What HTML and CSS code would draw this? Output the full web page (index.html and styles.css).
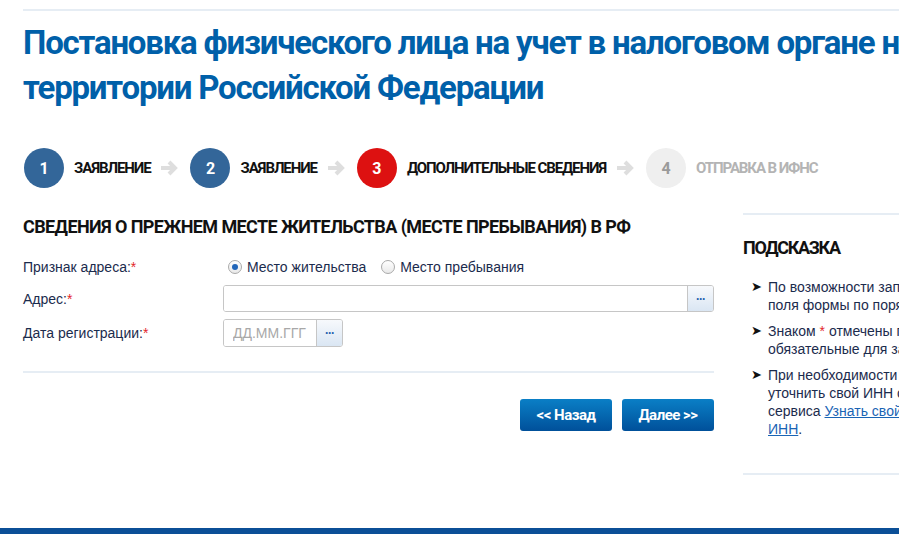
FILE: index.html
```html
<!DOCTYPE html>
<html lang="ru">

<head>
  <meta charset="UTF-8">
  <meta name="viewport" content="width=device-width, initial-scale=1.0">
  <title>Постановка на учет</title>
  <link rel="stylesheet" href="styles.css">
</head>

<body>
  <div class="page">
    <div class="rule"></div>
    <h1 class="title">Постановка физического лица на учет в налоговом органе на территории Российской Федерации</h1>

    <div class="steps">
      <div class="step done"><span class="num">1</span><span class="label">Заявление</span></div>
      <svg class="arrow" width="19" height="16" viewBox="0 0 19 16"><path d="M1 8H15M9 2L15 8L9 14" fill="none" stroke="#dedede" stroke-width="4" /></svg>
      <div class="step done"><span class="num">2</span><span class="label">Заявление</span></div>
      <svg class="arrow" width="19" height="16" viewBox="0 0 19 16"><path d="M1 8H15M9 2L15 8L9 14" fill="none" stroke="#dedede" stroke-width="4" /></svg>
      <div class="step current"><span class="num">3</span><span class="label">Дополнительные сведения</span></div>
      <svg class="arrow" width="19" height="16" viewBox="0 0 19 16"><path d="M1 8H15M9 2L15 8L9 14" fill="none" stroke="#dedede" stroke-width="4" /></svg>
      <div class="step next"><span class="num">4</span><span class="label">Отправка в ИФНС</span></div>
    </div>

    <div class="columns">
      <div class="main">
        <h2 class="section">Сведения о прежнем месте жительства (месте пребывания) в РФ</h2>

        <div class="form">
          <div class="lbl">Признак адреса:<span class="req">*</span></div>
          <div class="radios">
            <label class="radio"><span class="dot checked"></span>Место жительства</label>
            <label class="radio"><span class="dot"></span>Место пребывания</label>
          </div>

          <div class="lbl">Адрес:<span class="req">*</span></div>
          <div class="field wide">
            <input type="text">
            <span class="pick">&middot;&middot;&middot;</span>
          </div>

          <div class="lbl">Дата регистрации:<span class="req">*</span></div>
          <div class="field date">
            <input type="text" placeholder="ДД.ММ.ГГГ">
            <span class="pick">&middot;&middot;&middot;</span>
          </div>
        </div>

        <div class="buttons">
          <button class="btn">&lt;&lt; Назад</button>
          <button class="btn">Далее &gt;&gt;</button>
        </div>
      </div>

      <div class="aside">
        <h3 class="hint-title">Подсказка</h3>
        <ul class="hints">
          <li>По возможности заполняйте<br>поля формы по порядку.</li>
          <li>Знаком <span class="req">*</span> отмечены поля,<br>обязательные для заполнения.</li>
          <li>При необходимости Вы можете<br>уточнить свой ИНН с помощью<br>сервиса <a href="#">Узнать свой<br>ИНН</a>.</li>
        </ul>
      </div>
    </div>
  </div>
  <div class="footer"></div>
</body>

</html>
```

FILE: styles.css
```css
* {
  margin: 0;
  padding: 0;
  box-sizing: border-box;
}

html,
body {
  height: 100%;
}

body {
  display: flex;
  flex-direction: column;
  overflow: hidden;
  font-family: "Liberation Sans", Arial, sans-serif;
  font-size: 14px;
  color: #1b2b4d;
  background: #fff;
}

.page {
  flex: 1;
  width: 1100px;
  padding-left: 23px;
}

.rule {
  margin-top: 9px;
  height: 2px;
  background: #e6edf4;
}

/* condensed headings: no narrow face installed, so tighten Roboto */
.title,
.steps,
.section,
.hint-title,
.btn {
  font-family: Roboto, "Liberation Sans", sans-serif;
  font-weight: bold;
}

.title {
  width: 1000px;
  margin-top: 9px;
  font-size: 33px;
  line-height: 45px;
  letter-spacing: -1.2px;
  color: #0060a9;
}

.steps {
  display: flex;
  align-items: center;
  margin-top: 38px;
  text-transform: uppercase;
  font-size: 15px;
  letter-spacing: -1.1px;
}

.step {
  display: flex;
  align-items: center;
}

.step .num {
  width: 40px;
  height: 40px;
  border-radius: 50%;
  display: flex;
  align-items: center;
  justify-content: center;
  color: #fff;
  font-size: 16px;
  letter-spacing: 0;
  margin-left: 1px;
}

.step .label {
  margin-left: 10px;
  color: #111;
}

.step.done .num {
  background: #336699;
}

.step.current .num {
  background: #dd1111;
}

.step.next .num {
  background: #efefef;
  color: #9a9a9a;
}

.step.next .label {
  color: #b4b4b4;
}

.arrow {
  margin: 0 10px;
}

.columns {
  display: flex;
  margin-top: 18px;
}

.main {
  width: 691px;
}

.section {
  margin-top: 9px;
  font-size: 18px;
  line-height: 24px;
  letter-spacing: -0.6px;
  color: #111;
  text-transform: uppercase;
}

.form {
  display: grid;
  grid-template-columns: 200px 491px;
  grid-template-rows: 22px 27px 28px;
  row-gap: 7px;
  align-items: center;
  margin-top: 17px;
}

.req {
  color: #e3262b;
}

.radios {
  display: flex;
  align-items: center;
  gap: 15px;
  padding-left: 5px;
}

.radio {
  display: flex;
  align-items: center;
  gap: 5px;
}

.dot {
  width: 14px;
  height: 14px;
  border-radius: 50%;
  border: 1px solid #a9a9a9;
  background: linear-gradient(#fff, #e9e9e9);
  display: flex;
  align-items: center;
  justify-content: center;
}

.dot.checked::after {
  content: "";
  width: 6px;
  height: 6px;
  border-radius: 50%;
  background: #2166b9;
}

.field {
  display: flex;
  height: 27px;
  border: 1px solid #c6c6c6;
  border-radius: 3px;
  overflow: hidden;
}

.field.date {
  width: 120px;
  height: 28px;
}

.field input {
  flex: 1;
  min-width: 0;
  border: 0;
  outline: 0;
  padding: 0 9px;
  font: 14px "Liberation Sans", Arial, sans-serif;
}

.field input::placeholder {
  color: #a8a8a8;
}

.pick {
  width: 26px;
  border-left: 1px solid #c6c6c6;
  background: linear-gradient(#f7f9fc, #dae6f3);
  color: #1f5fae;
  font-weight: bold;
  font-size: 12px;
  display: flex;
  align-items: center;
  justify-content: center;
  letter-spacing: -1px;
}

.buttons {
  display: flex;
  justify-content: flex-end;
  gap: 10px;
  margin-top: 24px;
  padding-top: 26px;
  border-top: 2px solid #e6edf4;
}

.btn {
  width: 92px;
  height: 32px;
  border: 0;
  border-radius: 3px;
  background: linear-gradient(#0a7fc6, #00509a);
  color: #fff;
  font-size: 15px;
  letter-spacing: -0.5px;
}

.aside {
  margin-left: 29px;
  width: 260px;
  border-top: 2px solid #e6edf4;
  border-bottom: 2px solid #e6edf4;
  padding-bottom: 27px;
  align-self: flex-start;
  margin-top: 7px;
}

.hint-title {
  margin-top: 21px;
  font-size: 18px;
  line-height: 24px;
  letter-spacing: -1.3px;
  color: #111;
  text-transform: uppercase;
}

.hints {
  list-style: none;
  margin-top: 18px;
  line-height: 18px;
}

.hints li {
  position: relative;
  padding-left: 25px;
  margin-bottom: 8px;
}

.hints li + li {
  margin-top: 1px;
}

.hints li::before {
  content: "➤";
  position: absolute;
  left: 8px;
  top: 0;
  font-size: 13px;
  color: #111;
}

.hints a {
  color: #1a64b4;
}

.footer {
  height: 6px;
  background: #0b4f97;
}
```
